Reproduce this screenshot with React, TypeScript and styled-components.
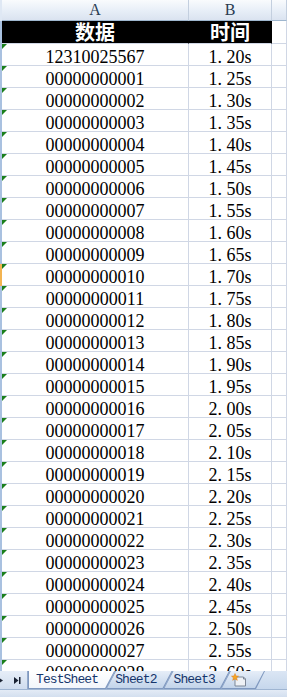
import React from 'react'
import styled, { createGlobalStyle, css } from 'styled-components'

const GlobalStyle = createGlobalStyle`
  html, body {
    margin: 0;
    padding: 0;
    background: #fff;
    overflow: hidden;
  }
`

const Window = styled.div`
  width: 287px;
  height: 697px;
  display: flex;
  flex-direction: column;
  overflow: hidden;
  background: #fff;
`

const Sheet = styled.div`
  height: 671px;
  flex: none;
  overflow: hidden;
  display: flex;
  flex-direction: column;
`

const Row = styled.div`
  display: flex;
  flex: none;
`

const RowEdge = styled.div<{ $active?: boolean; $head?: boolean }>`
  width: 2px;
  flex: none;
  background: ${p => (p.$active ? '#f3b451' : p.$head ? '#dfe8f4' : '#a9c1e0')};
`

const COL_A = 186
const COL_B = 82

const ColHead = styled.div<{ $w?: number }>`
  ${p => (p.$w ? css`width: ${p.$w}px;` : css`flex: 1;`)}
  height: 20px;
  overflow: hidden;
  border-right: 1px solid #c3cfdf;
  border-bottom: 1px solid #9eb6ce;
  background: linear-gradient(#f9fbfd, #e7eef7 55%, #dae3f0);
  color: #2a3c52;
  font-family: 'Liberation Serif', serif;
  font-size: 16px;
  line-height: 20px;
  text-align: center;
`

const TitleCell = styled.div<{ $w?: number; $dark?: boolean }>`
  ${p => (p.$w ? css`width: ${p.$w}px;` : css`flex: 1;`)}
  height: 22px;
  border-bottom: 1px solid #d0d7e5;
  background: ${p => (p.$dark ? '#000' : '#fff')};
  border-right: 1px solid ${p => (p.$dark ? '#000' : '#d0d7e5')};
  color: #fff;
  font-family: 'Noto Sans CJK SC', sans-serif;
  font-weight: 700;
  font-size: 20px;
  line-height: 22px;
  text-align: center;
`

const Cell = styled.div<{ $w?: number; $flag?: boolean }>`
  position: relative;
  overflow: hidden;
  ${p => (p.$w ? css`width: ${p.$w}px;` : css`flex: 1;`)}
  height: 21px;
  border-right: 1px solid #d0d7e5;
  border-bottom: 1px solid #d0d7e5;
  color: #000;
  font-family: 'Liberation Serif', serif;
  font-size: 18px;
  line-height: 26px;
  text-align: center;
  white-space: pre;
  ${p =>
    p.$flag &&
    css`
      &::before {
        content: '';
        position: absolute;
        left: 0;
        top: 0;
        border-top: 5px solid #1b7f1b;
        border-right: 5px solid transparent;
      }
    `}
`

const TabBar = styled.div`
  height: 18px;
  flex: none;
  display: flex;
  background: linear-gradient(#dbe6f4, #c6d7ec);
  border-bottom: 1px solid #9fb5d2;
`

const Nav = styled.div`
  width: 27px;
  flex: none;
  background: linear-gradient(#e7eef8, #cfdcee);
  border-right: 1px solid #94aacb;
  display: flex;
  align-items: center;
`

const Tabs = styled.div`
  display: flex;
`

const slant = (first?: boolean) =>
  first
    ? 'polygon(0 0, 100% 0, calc(100% - 9px) 100%, 0 100%)'
    : 'polygon(9px 0, 100% 0, calc(100% - 9px) 100%, 0 100%)'

const Tab = styled.div<{ $active?: boolean; $first?: boolean; $left: number; $right: number }>`
  position: relative;
  height: 18px;
  margin-left: ${p => (p.$first ? '0' : '-9px')};
  padding: 0 ${p => p.$right}px 0 ${p => p.$left}px;
  background: #7f98bf;
  clip-path: ${p => slant(p.$first)};
  z-index: ${p => (p.$active ? 2 : 1)};
  font-family: 'Liberation Mono', monospace;
  font-size: 13px;
  letter-spacing: -0.9px;
  line-height: 18px;
  color: #15356b;

  &::before {
    content: '';
    position: absolute;
    inset: 0 1px 1px 1px;
    background: ${p =>
      p.$active ? 'linear-gradient(#ffffff, #f2f6fb)' : 'linear-gradient(#e6eef8, #c3d4ea)'};
    clip-path: ${p => slant(p.$first)};
  }
`

const TabLabel = styled.span`
  position: relative;
  display: block;
`

const Footer = styled.div`
  flex: 1;
  background: linear-gradient(#e3ebf6, #d3dfef);
`

const NavIcon = () => (
  <svg width="27" height="18" viewBox="0 0 27 18">
    <path d="M-2 6 L3 9.5 L-2 13 Z" fill="#1a2233" />
    <path d="M14 6 L18.5 9.5 L14 13 Z" fill="#1a2233" />
    <rect x="19" y="6" width="1.5" height="7" fill="#1a2233" />
  </svg>
)

const NewSheetIcon = () => (
  <svg width="16" height="14" viewBox="0 0 16 14" style={{ display: 'block', marginTop: 2 }}>
    <path d="M4 4 H12.5 L14.5 6 V13 H4 Z" fill="#eef1f5" stroke="#7d8797" strokeWidth="1" />
    <path d="M12.5 4 V6 H14.5" fill="none" stroke="#7d8797" strokeWidth="1" />
    <path
      d="M4 0.5 L5 3 L7.5 3.2 L5.6 4.8 L6.3 7.3 L4 5.9 L1.7 7.3 L2.4 4.8 L0.5 3.2 L3 3 Z"
      fill="#f6a623"
      stroke="#e07b10"
      strokeWidth="0.5"
    />
  </svg>
)

const times = Array.from({ length: 29 }, (_, i) => (1.2 + i * 0.05).toFixed(2).replace('.', '. ') + 's')
const ids = Array.from({ length: 29 }, (_, i) => (i === 0 ? '12310025567' : String(i).padStart(11, '0')))

export default function App() {
  return (
    <Window>
      <GlobalStyle />
      <Sheet>
        <Row>
          <RowEdge $head />
          <ColHead $w={COL_A}>A</ColHead>
          <ColHead $w={COL_B}>B</ColHead>
          <ColHead />
        </Row>
        <Row>
          <RowEdge />
          <TitleCell $w={COL_A} $dark>数据</TitleCell>
          <TitleCell $w={COL_B} $dark>时间</TitleCell>
          <TitleCell />
        </Row>
        {ids.map((id, i) => (
          <Row key={id}>
            <RowEdge $active={i === 10} />
            <Cell $w={COL_A} $flag>{id}</Cell>
            <Cell $w={COL_B}>{times[i]}</Cell>
            <Cell />
          </Row>
        ))}
      </Sheet>
      <TabBar>
        <Nav>
          <NavIcon />
        </Nav>
        <Tabs>
          <Tab $first $active $left={8} $right={17}>
            <TabLabel>TestSheet</TabLabel>
          </Tab>
          <Tab $left={9} $right={16}>
            <TabLabel>Sheet2</TabLabel>
          </Tab>
          <Tab $left={10} $right={15}>
            <TabLabel>Sheet3</TabLabel>
          </Tab>
          <Tab $left={10} $right={18}>
            <TabLabel>
              <NewSheetIcon />
            </TabLabel>
          </Tab>
        </Tabs>
      </TabBar>
      <Footer />
    </Window>
  )
}
